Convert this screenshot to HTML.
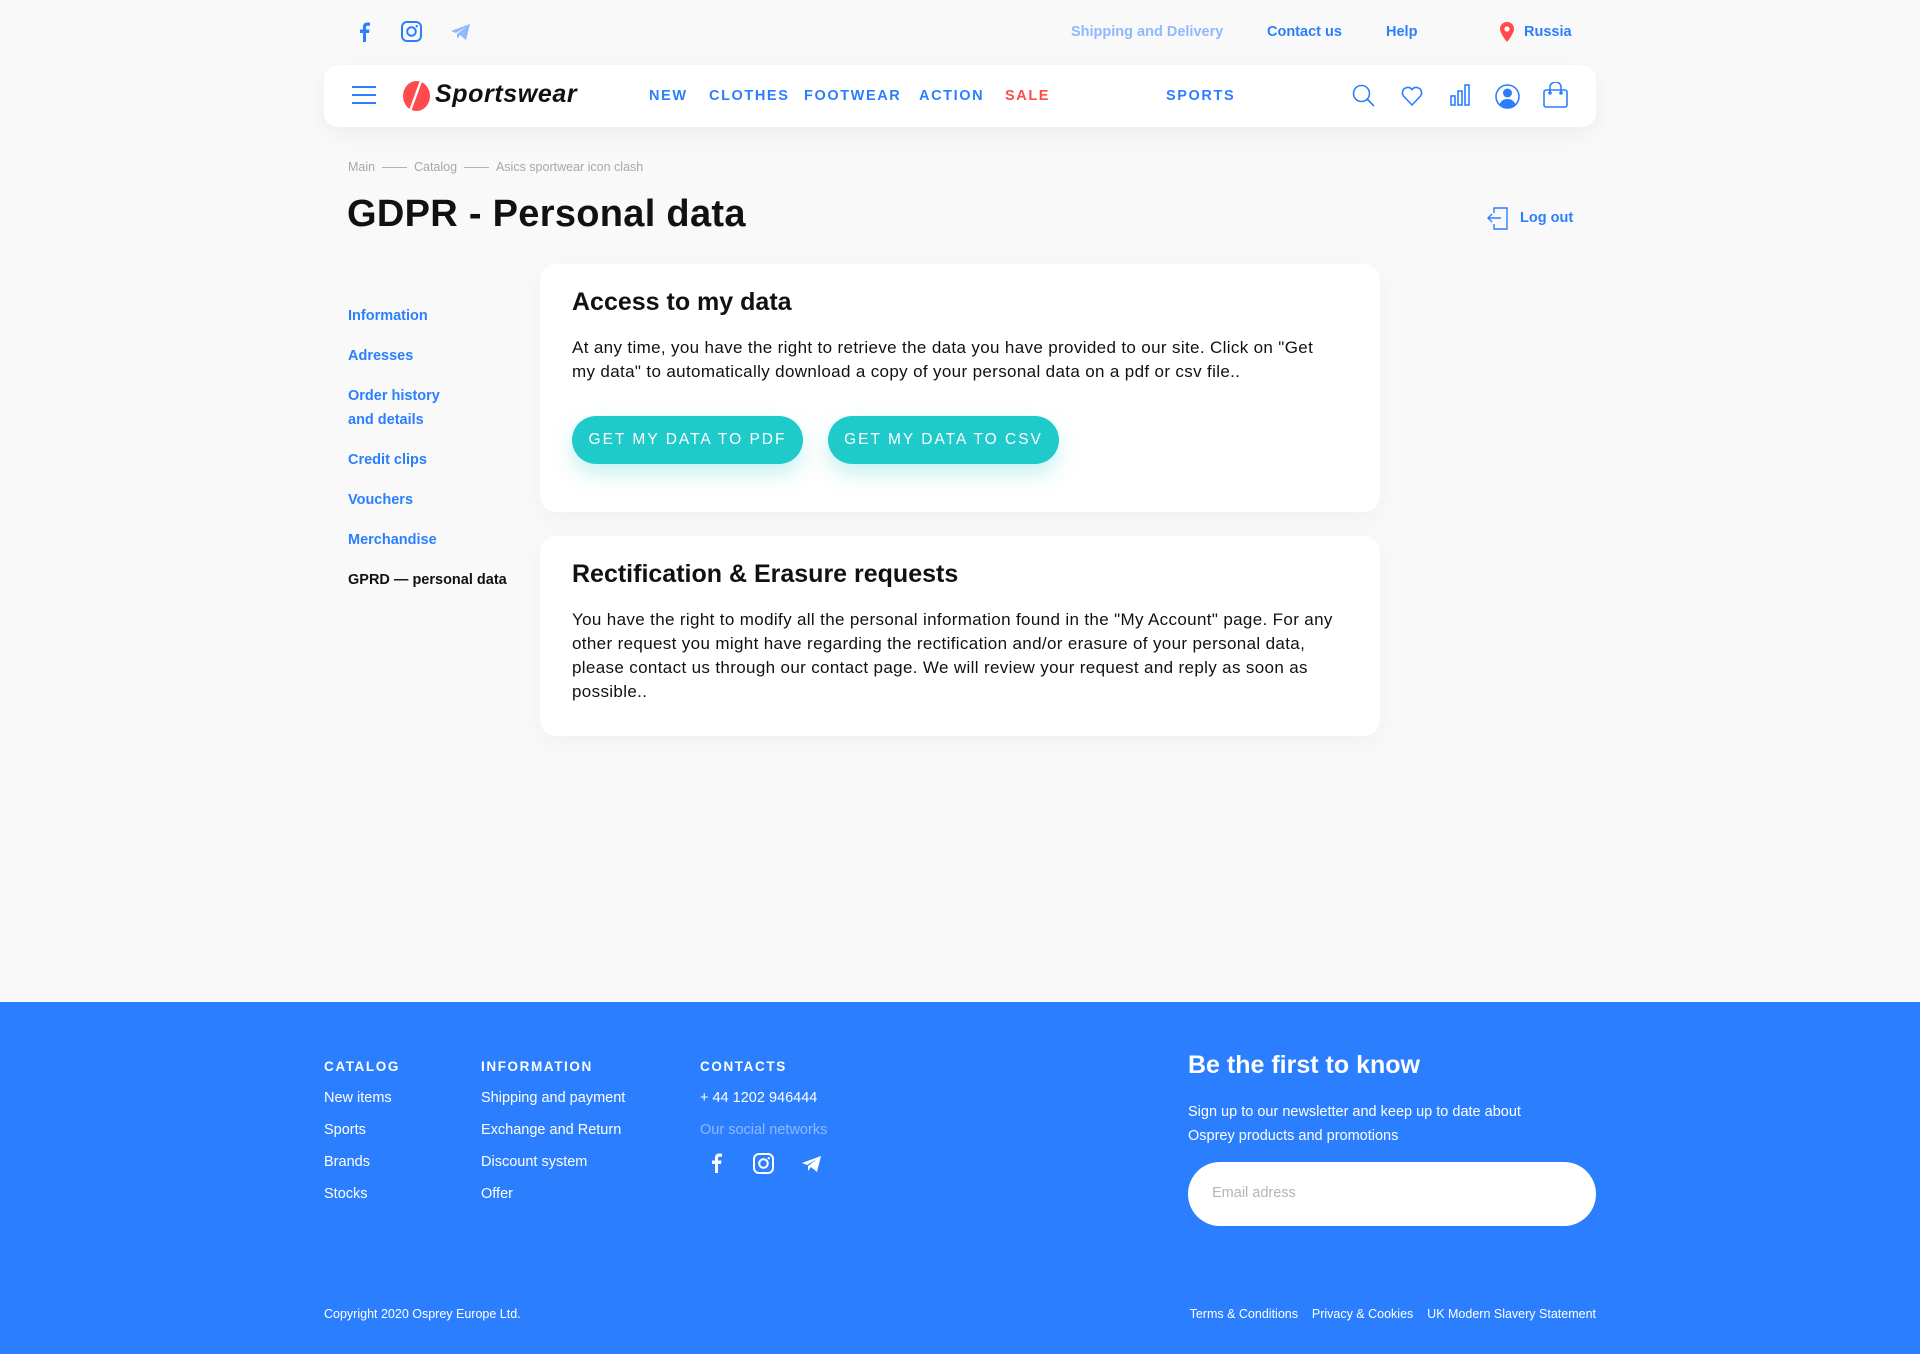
<!DOCTYPE html>
<html><head><meta charset="utf-8">
<style>
*{margin:0;padding:0;box-sizing:border-box}
body{width:1920px;height:1354px;background:#f9f9f9;font-family:"Liberation Sans",sans-serif;position:relative;overflow:hidden}
.a{position:absolute;white-space:nowrap}
.blue{color:#2b7fff}
.top{font-size:14.5px;font-weight:bold;top:24px}
.nav{font-size:14.5px;font-weight:bold;letter-spacing:1.6px;top:88px;color:#2b7fff}
.side{font-size:14.5px;font-weight:bold;color:#2b7fff;left:348px}
.card{position:absolute;left:540px;width:840px;background:#fff;border-radius:16px;box-shadow:0 6px 24px rgba(0,0,0,.04)}
.ct{position:absolute;left:32px;font-size:25px;font-weight:bold;color:#111;white-space:nowrap}
.cb{position:absolute;left:32px;width:775px;font-size:17px;letter-spacing:0.35px;line-height:24px;color:#111}
.btn{position:absolute;top:152px;height:48px;width:231px;border-radius:24px;background:#1fcbca;color:#fff;font-size:15.5px;letter-spacing:2px;text-align:center;line-height:48px;box-shadow:0 10px 20px rgba(31,203,202,.25)}
footer{position:absolute;left:0;top:1002px;width:1920px;height:352px;background:#2b7fff;color:#fff}
.fh{font-size:13.5px;font-weight:bold;letter-spacing:1.6px;top:57px}
.fi{font-size:14.5px}
</style></head><body>
<svg class="a" style="left:356px;top:21px" width="16" height="22" viewBox="0 0 16 22"><path d="M10 21V12h3l.5-3.5H10V6.5c0-1 .3-1.7 1.8-1.7H14V1.7C13.6 1.6 12.5 1.5 11.3 1.5 8.7 1.5 7 3 7 6v2.5H4V12h3v9z" fill="#2b7fff"/></svg>
<svg class="a" style="left:401px;top:21px" width="21" height="21" viewBox="0 0 21 21"><rect x="1" y="1" width="19" height="19" rx="5" fill="none" stroke="#2b7fff" stroke-width="2"/><circle cx="10.5" cy="10.5" r="4.3" fill="none" stroke="#2b7fff" stroke-width="2"/><circle cx="15.8" cy="5.2" r="1.2" fill="#2b7fff"/></svg>
<svg class="a" style="left:450px;top:23px" width="21" height="18" viewBox="0 0 21 18"><path d="M1 8L20 1 16 17 10 12 7 16 7 11 16 4 6 10z" fill="#8fb8ff"/></svg>
<div class="a top" style="left:1071px;color:#8fb8ff">Shipping and Delivery</div>
<div class="a top blue" style="left:1267px">Contact us</div>
<div class="a top blue" style="left:1386px">Help</div>
<svg class="a" style="left:1499px;top:21px" width="16" height="22" viewBox="0 0 16 22"><path d="M8 21C8 21 1 12.5 1 8a7 7 0 0114 0c0 4.5-7 13-7 13z" fill="#ff4b4b"/><circle cx="8" cy="8" r="2.6" fill="#fff"/></svg>
<div class="a top blue" style="left:1524px">Russia</div>

<div class="a" style="left:324px;top:65px;width:1272px;height:62px;background:#fff;border-radius:14px;box-shadow:0 8px 24px rgba(0,0,0,.05)"></div>
<div class="a" style="left:352px;top:86px;width:24px;height:2px;background:#2b7fff;box-shadow:0 8px 0 #2b7fff,0 16px 0 #2b7fff"></div>
<svg class="a" style="left:402px;top:80px" width="29" height="32" viewBox="0 0 29 32"><ellipse cx="14.5" cy="16" rx="13.5" ry="15" fill="#ff4b4b"/><path d="M19 1L8 31" stroke="#fff" stroke-width="2.4"/></svg>
<div class="a" style="left:435px;top:80px;font-size:25px;letter-spacing:0.6px;font-weight:bold;font-style:italic;color:#111">Sportswear</div>
<div class="a nav" style="left:649px">NEW</div>
<div class="a nav" style="left:709px">CLOTHES</div>
<div class="a nav" style="left:804px">FOOTWEAR</div>
<div class="a nav" style="left:919px">ACTION</div>
<div class="a nav" style="left:1005px;color:#ff4b4b">SALE</div>
<div class="a nav" style="left:1166px">SPORTS</div>
<svg class="a" style="left:1352px;top:84px" width="24" height="24" viewBox="0 0 24 24" fill="none" stroke="#2b7fff" stroke-width="1.6"><circle cx="9.5" cy="9.5" r="8"/><path d="M15.5 15.5L22 22"/></svg>
<svg class="a" style="left:1401px;top:85px" width="22" height="22" viewBox="0 0 22 22" fill="none" stroke="#2b7fff" stroke-width="1.6"><path d="M11 20L2.5 11A5 5 0 0111 4.5 5 5 0 0119.5 11z"/></svg>
<svg class="a" style="left:1450px;top:84px" width="20" height="22" viewBox="0 0 20 22" fill="none" stroke="#2b7fff" stroke-width="1.6"><rect x="1" y="12" width="4" height="9"/><rect x="8" y="7" width="4" height="14"/><rect x="15" y="1" width="4" height="20"/></svg>
<svg class="a" style="left:1495px;top:84px" width="25" height="25" viewBox="0 0 25 25"><circle cx="12.5" cy="12.5" r="11.5" fill="none" stroke="#2b7fff" stroke-width="1.6"/><circle cx="12.5" cy="9" r="4.5" fill="#2b7fff"/><path d="M4.5 20.5c1.5-4 4.5-5.5 8-5.5s6.5 1.5 8 5.5a11 11 0 01-16 0z" fill="#2b7fff"/></svg>
<svg class="a" style="left:1543px;top:82px" width="25" height="26" viewBox="0 0 25 26" fill="none" stroke="#2b7fff" stroke-width="1.6"><rect x="1" y="8" width="23" height="17" rx="2"/><path d="M7 10V5a5.5 5 0 0111 0v5"/><circle cx="7" cy="11" r="1" fill="#2b7fff"/><circle cx="18" cy="11" r="1" fill="#2b7fff"/></svg>

<div class="a" style="left:348px;top:160px;font-size:12.5px;color:#a8a8a8">Main &nbsp;—— &nbsp;Catalog &nbsp;—— &nbsp;Asics sportwear icon clash</div>
<div class="a" style="left:347px;top:193px;font-size:38px;letter-spacing:0.3px;font-weight:bold;color:#111">GDPR - Personal data</div>
<svg class="a" style="left:1486px;top:206px" width="23" height="24" viewBox="0 0 23 24" fill="none" stroke="#2b7fff" stroke-width="1.4"><path d="M8 7V2h13v21H8v-5"/><path d="M15 12H2M6 8l-4 4 4 4"/></svg>
<div class="a" style="left:1520px;top:210px;font-size:14.5px;font-weight:bold;color:#2b7fff">Log out</div>

<div class="a side" style="top:308px">Information</div>
<div class="a side" style="top:348px">Adresses</div>
<div class="a side" style="line-height:24px;top:384px">Order history<br>and details</div>
<div class="a side" style="top:452px">Credit clips</div>
<div class="a side" style="top:492px">Vouchers</div>
<div class="a side" style="top:532px">Merchandise</div>
<div class="a side" style="top:572px;color:#111">GPRD — personal data</div>

<div class="card" style="top:264px;height:248px">
 <div class="ct" style="top:24px">Access to my data</div>
 <div class="cb" style="top:72px">At any time, you have the right to retrieve the data you have provided to our site. Click on "Get<br>my data" to automatically download a copy of your personal data on a pdf or csv file..</div>
 <div class="btn" style="left:32px">GET MY DATA TO PDF</div>
 <div class="btn" style="left:288px">GET MY DATA TO CSV</div>
</div>
<div class="card" style="top:536px;height:200px">
 <div class="ct" style="top:24px">Rectification &amp; Erasure requests</div>
 <div class="cb" style="top:72px">You have the right to modify all the personal information found in the "My Account" page. For any<br>other request you might have regarding the rectification and/or erasure of your personal data,<br>please contact us through our contact page. We will review your request and reply as soon as<br>possible..</div>
</div>

<footer>
 <div class="a fh" style="left:324px">CATALOG</div>
 <div class="a fh" style="left:481px">INFORMATION</div>
 <div class="a fh" style="left:700px">CONTACTS</div>
 <div class="a fi" style="left:324px;top:88px">New items</div>
 <div class="a fi" style="left:324px;top:120px">Sports</div>
 <div class="a fi" style="left:324px;top:152px">Brands</div>
 <div class="a fi" style="left:324px;top:184px">Stocks</div>
 <div class="a fi" style="left:481px;top:88px">Shipping and payment</div>
 <div class="a fi" style="left:481px;top:120px">Exchange and Return</div>
 <div class="a fi" style="left:481px;top:152px">Discount system</div>
 <div class="a fi" style="left:481px;top:184px">Offer</div>
 <div class="a fi" style="left:700px;top:88px">+ 44 1202 946444</div>
 <div class="a fi" style="left:700px;top:120px;color:#8fb8ff">Our social networks</div>
 <svg class="a" style="left:708px;top:150px" width="16" height="22" viewBox="0 0 16 22"><path d="M10 21V12h3l.5-3.5H10V6.5c0-1 .3-1.7 1.8-1.7H14V1.7C13.6 1.6 12.5 1.5 11.3 1.5 8.7 1.5 7 3 7 6v2.5H4V12h3v9z" fill="#fff"/></svg>
 <svg class="a" style="left:753px;top:151px" width="21" height="21" viewBox="0 0 21 21"><rect x="1" y="1" width="19" height="19" rx="5" fill="none" stroke="#fff" stroke-width="2"/><circle cx="10.5" cy="10.5" r="4.3" fill="none" stroke="#fff" stroke-width="2"/><circle cx="15.8" cy="5.2" r="1.2" fill="#fff"/></svg>
 <svg class="a" style="left:801px;top:153px" width="21" height="18" viewBox="0 0 21 18"><path d="M1 8L20 1 16 17 10 12 7 16 7 11 16 4 6 10z" fill="#fff"/></svg>
 <div class="a" style="left:1188px;top:49px;font-size:25px;font-weight:bold">Be the first to know</div>
 <div class="a" style="left:1188px;top:98px;font-size:14.5px;line-height:24px">Sign up to our newsletter and keep up to date about<br>Osprey products and promotions</div>
 <div class="a" style="left:1188px;top:160px;width:408px;height:64px;background:#fff;border-radius:32px"></div>
 <div class="a" style="left:1212px;top:183px;font-size:14.5px;color:#b5b5b5">Email adress</div>
 <div class="a" style="left:324px;top:305px;font-size:12.5px">Copyright 2020 Osprey Europe Ltd.</div>
 <div class="a" style="right:324px;top:305px;font-size:12.5px">Terms &amp; Conditions &nbsp;&nbsp; Privacy &amp; Cookies &nbsp;&nbsp; UK Modern Slavery Statement</div>
</footer>
</body></html>
